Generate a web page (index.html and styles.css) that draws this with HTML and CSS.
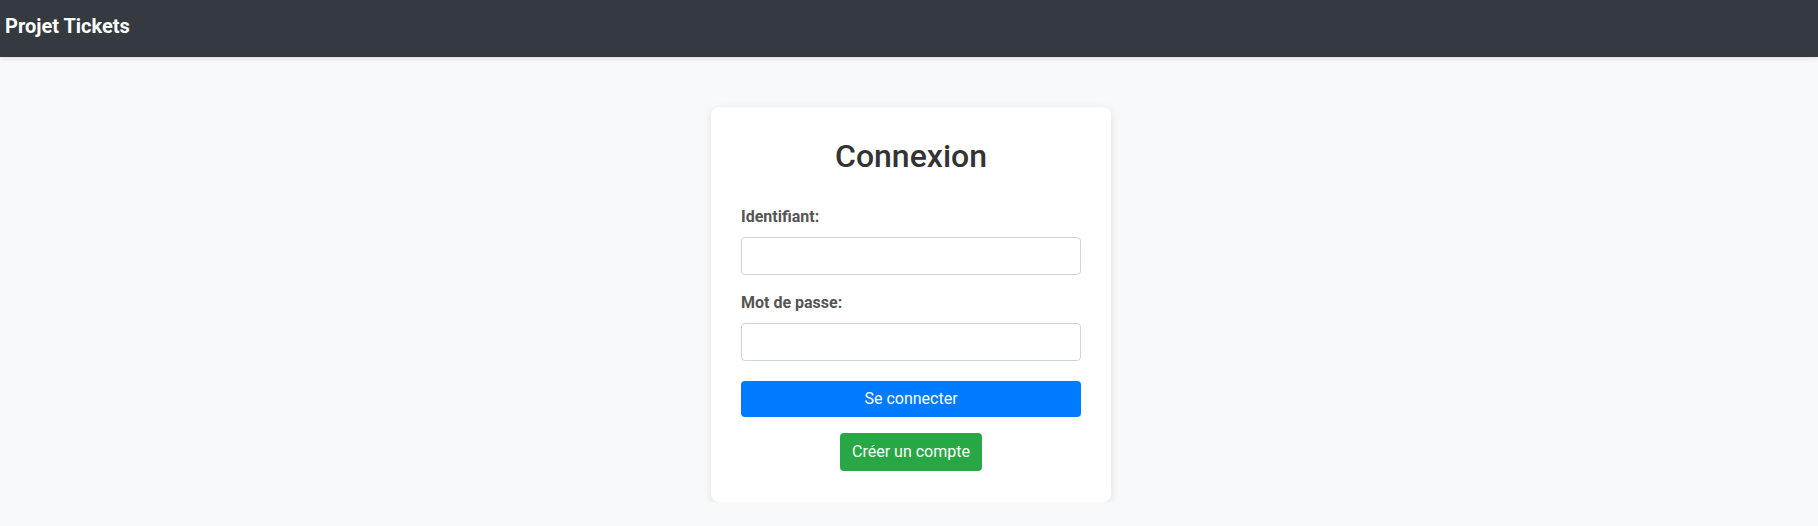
FILE: index.html
```html
<!DOCTYPE html>
<html lang="fr">
<head>
<meta charset="utf-8">
<title>Projet Tickets</title>
<link rel="stylesheet" href="styles.css">
</head>
<body>
<nav class="navbar">
  <span class="brand">Projet Tickets</span>
</nav>
<main class="main">
  <div class="card">
    <h2 class="title">Connexion</h2>
    <form class="form">
      <div class="group">
        <label class="label" for="id">Identifiant:</label>
        <input class="input" id="id" type="text">
      </div>
      <div class="group">
        <label class="label" for="pw">Mot de passe:</label>
        <input class="input" id="pw" type="password">
      </div>
      <button class="btn btn-primary" type="button">Se connecter</button>
      <div class="center">
        <button class="btn btn-success" type="button">Créer un compte</button>
      </div>
    </form>
  </div>
</main>
</body>
</html>
```
FILE: styles.css
```css
* { box-sizing: border-box; }
html, body { margin: 0; padding: 0; }
body {
  background: #f8f9fa;
  font-family: Roboto, "Liberation Sans", Arial, sans-serif;
  font-size: 16px;
  line-height: 1.5;
  color: #212529;
}
.navbar {
  height: 57px;
  background: #343a40;
  padding: 11px 5px 0;
  box-shadow: 0 2px 4px rgba(0,0,0,0.1);
  position: relative;
  z-index: 1;
}
.brand {
  color: #fff;
  font-weight: 700;
  font-size: 20px;
  line-height: 30px;
}
.main {
  display: flex;
  justify-content: center;
  padding: 50px 0 0 4px;
}
.card {
  width: 400px;
  background: #fff;
  border-radius: 8px;
  box-shadow: 0 2px 10px rgba(0,0,0,0.1);
  padding: 30px 30px 31px;
}
.title {
  margin: 0 0 30px;
  text-align: center;
  font-size: 32px;
  font-weight: 500;
  line-height: 1.2;
  color: #333;
}
.form { margin: 0; }
.group { margin-bottom: 16px; }
.group + .group { margin-bottom: 20px; }
.label {
  display: block;
  margin-bottom: 8px;
  font-weight: 700;
  color: #555;
}
.input {
  display: block;
  width: 100%;
  height: 38px;
  border: 1px solid #ced4da;
  border-radius: 4px;
  background: #fff;
  font: inherit;
  padding: 6px 12px;
}
.btn {
  font: inherit;
  border: none;
  border-radius: 4px;
  color: #fff;
  cursor: pointer;
}
.btn-primary {
  display: block;
  width: 100%;
  height: 36px;
  background: #007bff;
  padding: 0;
  line-height: 36px;
}
.center {
  display: flex;
  justify-content: center;
  margin-top: 16px;
}
.btn-success {
  background: #28a745;
  height: 38px;
  padding: 0 12px;
  line-height: 38px;
}
```
